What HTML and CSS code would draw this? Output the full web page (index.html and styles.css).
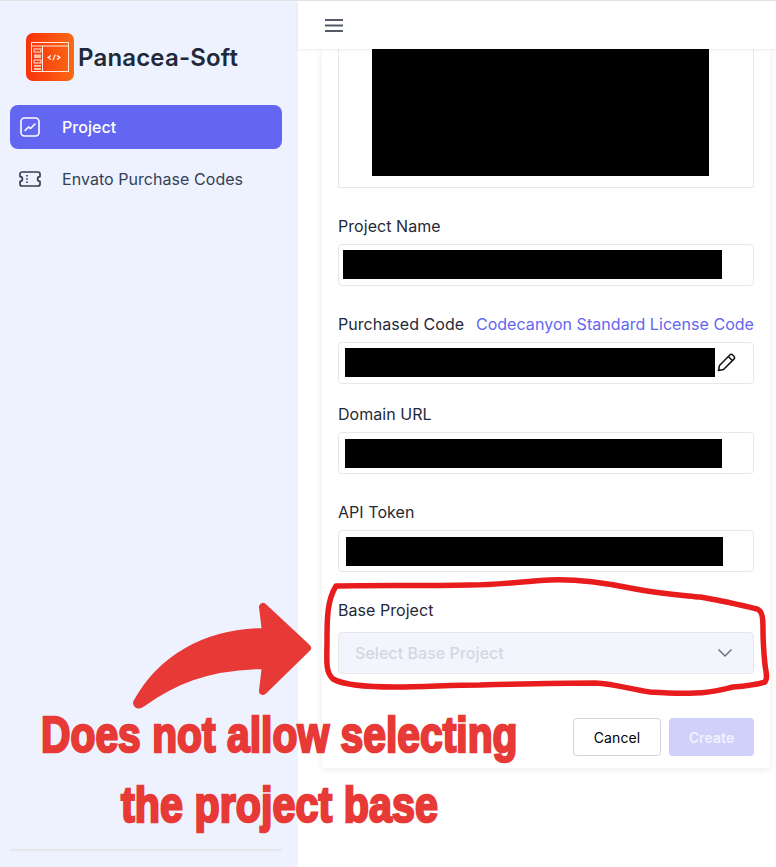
FILE: index.html
```html
<!DOCTYPE html>
<html lang="en">
<head>
    <meta charset="UTF-8">
    <meta name="viewport" content="width=device-width, initial-scale=1.0">
    <title>Panacea-Soft</title>
    <link rel="stylesheet" href="styles.css">
</head>
<body>
    <div class="app">
        <aside class="sidebar">
            <div class="brand">
                <svg class="brand-logo" width="48" height="48" viewBox="0 0 48 48">
                    <defs>
                        <linearGradient id="logoFill" x1="0" y1="0" x2="1" y2="0">
                            <stop offset="0" stop-color="#f9300c"/>
                            <stop offset="1" stop-color="#fb6a14"/>
                        </linearGradient>
                    </defs>
                    <rect width="48" height="48" rx="7" fill="url(#logoFill)"/>
                    <g fill="none" stroke="#ffe9df" stroke-width="1">
                        <rect x="5.500" y="9.500" width="37" height="29"/>
                        <path d="M5.500 13h37M16.500 13v25.500"/>
                        <rect x="8" y="16" width="7" height="3"/>
                        <rect x="8" y="27" width="7" height="3"/>
                    </g>
                    <path d="M8 21.500h7v3.500h-7zM8 32h7v1.800h-7zM8 35h7v2h-7z" fill="#ffc2a8"/>
                    <path d="M25 22.500l-3 2 3 2M31 22.500l3 2-3 2M29.300 21.500l-2.500 6" fill="none" stroke="#fff" stroke-width="1.100"/>
                </svg>
                <span class="brand-name">Panacea-Soft</span>
            </div>
            <nav class="nav">
                <a class="nav-item active">
                    <svg class="nav-icon" width="20" height="20" viewBox="0 0 20 20" fill="none" stroke="currentColor" stroke-width="1.600" stroke-linecap="round" stroke-linejoin="round">
                        <rect x="1" y="1" width="18" height="18" rx="3.500"/>
                        <path d="M5 13.500l3.500-3.500 2 1.500 4.500-4.500"/>
                    </svg>
                    <span>Project</span>
                </a>
                <a class="nav-item">
                    <svg class="nav-icon nav-icon-wide" width="22" height="16" viewBox="0 0 22 16" fill="none" stroke="currentColor" stroke-width="1.700" stroke-linejoin="round">
                        <path d="M3 1h16a2 2 0 0 1 2 2v2.600a2.400 2.400 0 0 0 0 4.800V13a2 2 0 0 1-2 2H3a2 2 0 0 1-2-2v-2.600a2.400 2.400 0 0 0 0-4.800V3a2 2 0 0 1 2-2z"/>
                        <path d="M8 4v1.500M8 7.300v1.500M8 10.600v1.500"/>
                    </svg>
                    <span>Envato Purchase Codes</span>
                </a>
            </nav>
            <div class="sidebar-foot"></div>
        </aside>

        <div class="main">
            <header class="topbar">
                <svg width="18" height="13" viewBox="0 0 18 13" fill="#545b66">
                    <rect width="18" height="2"/>
                    <rect y="5.500" width="18" height="2"/>
                    <rect y="11" width="18" height="2"/>
                </svg>
            </header>
            <div class="content">
                <form class="card">
                    <div class="preview"><div class="redact redact-preview"></div></div>

                    <div class="field field-first">
                        <label class="label">Project Name</label>
                        <div class="input input-name"><div class="redact redact-name"></div></div>
                    </div>

                    <div class="field">
                        <div class="label-row">
                            <label class="label">Purchased Code</label>
                            <a class="label-link">Codecanyon Standard License Code</a>
                        </div>
                        <div class="input input-raised">
                            <div class="redact redact-code"></div>
                            <svg class="pencil" width="19" height="19" viewBox="0 0 19 19" fill="none" stroke="#111" stroke-width="1.500" stroke-linejoin="round">
                                <path d="M1.500 17.500l1-5L12.800 2a2 2 0 0 1 2.800 0l1.300 1.300a2 2 0 0 1 0 2.800L6.500 16.500z"/>
                                <path d="M11.300 3.500l4.200 4.200"/>
                            </svg>
                        </div>
                    </div>

                    <div class="field field-tight">
                        <label class="label">Domain URL</label>
                        <div class="input"><div class="redact redact-url"></div></div>
                    </div>

                    <div class="field">
                        <label class="label">API Token</label>
                        <div class="input input-token"><div class="redact redact-token"></div></div>
                    </div>

                    <div class="field">
                        <label class="label label-base">Base Project</label>
                        <div class="select">
                            <span>Select Base Project</span>
                            <svg width="16" height="10" viewBox="0 0 16 10" fill="none" stroke="#6b7280" stroke-width="1.500">
                                <path d="M1.500 1.500L8 8l6.500-6.500"/>
                            </svg>
                        </div>
                    </div>

                    <div class="actions">
                        <button type="button" class="btn btn-cancel">Cancel</button>
                        <button type="button" class="btn btn-create">Create</button>
                    </div>
                </form>
            </div>
        </div>
    </div>

    <!-- Hand drawn notes on top of the screenshot -->
    <svg class="notes" width="776" height="867" viewBox="0 0 776 867">
        <path class="note-ring" d="M336 586C370 585 420 586 470 585C500 585 525 581 550 580C575 579 600 582 630 588C660 594 680 595 700 597C720 600 740 605 757 609C763 611 763 620 763 630C763 640 764 655 765 665C766 672 768 678 765 682C755 685 745 686 733 687C720 690 710 693 695 693C680 694 665 693 650 692C630 689 615 684 595 683C560 683 520 684 480 685C450 685 425 687 395 687C370 687 345 686 333 679C325 672 327 660 327 640C327 620 327 600 336 586z"/>
        <path class="note-arrow" d="M307 648L263 607L266 632C205 632 160 660 137 703C137 705 140 705 142 703C170 683 205 665 266 665L263 691z"/>
        <text class="note-text" transform="translate(41 752) scale(0.76 1)" textLength="627" lengthAdjust="spacingAndGlyphs">Does not allow selecting</text>
        <text class="note-text" transform="translate(121 822) scale(0.76 1)" textLength="417" lengthAdjust="spacingAndGlyphs">the project base</text>
    </svg>
</body>
</html>
```
FILE: styles.css
```css
* {
    box-sizing: border-box;
}

body {
    margin: 0;
    height: 867px;
    overflow: hidden;
    position: relative;
    font-family: 'Inter', sans-serif;
    font-size: 16px;
    letter-spacing: 0.05px;
    color: #1f2937;
    background-color: #fff;
}

.app {
    display: flex;
    height: 100%;
    border-top: 1px solid #e3e3e3;
}

/* Sidebar */
.sidebar {
    width: 298px;
    flex-shrink: 0;
    display: flex;
    flex-direction: column;
    padding: 32px 16px 16px 10px;
    background-color: #eef2ff;
}

.brand {
    display: flex;
    align-items: center;
    gap: 4px;
    padding-left: 16px;
    margin-bottom: 24px;
}

.brand-name {
    font-size: 24px;
    font-weight: 600;
    letter-spacing: 0.17px;
    color: #1e293b;
}

.nav {
    display: flex;
    flex-direction: column;
    gap: 8px;
    flex: 1;
}

.nav-item {
    display: flex;
    align-items: center;
    height: 44px;
    padding-left: 10px;
    border-radius: 8px;
    color: #334155;
}

.nav-icon {
    flex-shrink: 0;
    margin-right: 22px;
}

.nav-icon-wide {
    margin-left: -1px;
    margin-right: 21px;
}

.nav-item.active {
    background-color: #6366f1;
    color: #fff;
    font-weight: 500;
}

.sidebar-foot {
    border-top: 2px solid #e5e7eb;
}

/* Main */
.main {
    flex: 1;
    position: relative;
    min-width: 0;
}

.topbar {
    position: relative;
    z-index: 1;
    height: 48px;
    display: flex;
    align-items: center;
    padding-left: 27px;
    background-color: #fff;
    box-shadow: 0 1px 3px rgba(0, 0, 0, 0.08);
}

.content {
    padding: 0 6px 0 24px;
}

.card {
    display: flex;
    flex-direction: column;
    height: 719px;
    padding: 0 16px;
    background-color: #fff;
    border-radius: 0 0 4px 4px;
    box-shadow: 0 1px 8px rgba(0, 0, 0, 0.09);
}

.preview {
    height: 139px;
    padding-left: 33px;
    border: 1px solid #e5e7eb;
    border-top: 0;
}

.redact {
    height: 29px;
    background-color: #000;
}

.redact-preview {
    width: 337px;
    height: 127px;
}

.redact-name {
    width: 379px;
}

.redact-code {
    width: 370px;
}

.redact-url {
    width: 377px;
}

.redact-token {
    width: 377px;
}

.field {
    margin-top: 26px;
}

.field-first {
    margin-top: 26px;
}

.field-tight {
    margin-top: 18px;
}

.label {
    display: block;
    line-height: 24px;
    margin-bottom: 6px;
    color: #1f2937;
}

.label-base {
    margin-bottom: 10px;
}

.label-row {
    display: flex;
    justify-content: space-between;
}

.label-link {
    line-height: 24px;
    color: #6366f1;
}

.input {
    height: 42px;
    display: flex;
    align-items: center;
    padding-left: 6px;
    border: 1px solid #e5e7eb;
    border-radius: 4px;
}

.input-name {
    padding-left: 4px;
    padding-bottom: 1px;
}

.input-raised {
    padding-bottom: 1px;
}

.input-token {
    padding-left: 7px;
}

.pencil {
    margin-left: 2px;
}

.select {
    height: 42px;
    display: flex;
    align-items: center;
    justify-content: space-between;
    padding: 0 20px 0 16px;
    background-color: #f4f4fd;
    border: 1px solid #e5e7eb;
    border-radius: 4px;
    color: #d3d7e3;
    font-weight: 500;
}

.actions {
    display: flex;
    justify-content: flex-end;
    gap: 8px;
    margin-top: 44px;
}

.btn {
    height: 38px;
    border-radius: 4px;
    font-family: inherit;
    font-size: 14px;
    font-weight: 400;
    letter-spacing: 0.1px;
}

.btn-cancel {
    width: 88px;
    background-color: #fff;
    border: 1px solid #d1d5db;
    color: #000;
}

.btn-create {
    width: 85px;
    background-color: #d0d1fb;
    border: none;
    color: #f1f2ff;
    font-weight: 600;
}

/* Annotations */
.notes {
    position: absolute;
    top: 0;
    left: 0;
    pointer-events: none;
}

.note-ring {
    fill: none;
    stroke: #e81c1c;
    stroke-width: 5.500;
    stroke-linejoin: round;
}

.note-arrow {
    fill: #e73a36;
    stroke: #e73a36;
    stroke-width: 8;
    stroke-linejoin: round;
}

.note-text {
    font-family: 'Liberation Sans', sans-serif;
    font-size: 50px;
    font-weight: 700;
    fill: #e73a36;
    stroke: #e73a36;
    stroke-width: 2.500;
}
```
